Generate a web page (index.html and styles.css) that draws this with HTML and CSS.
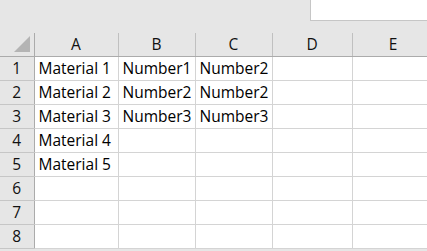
FILE: index.html
```html
<!DOCTYPE html>
<html lang="en">
<head>
    <meta charset="UTF-8" />
    <title>Sheet1</title>
    <link rel="stylesheet" href="styles.css">
</head>
<body>
    <div class="toolbar">
        <div class="name-box"></div>
    </div>
    <table class="sheet">
        <colgroup>
            <col class="w-head">
            <col class="w-a">
            <col class="w-b">
            <col class="w-c">
            <col class="w-d">
            <col class="w-e">
        </colgroup>
        <thead>
            <tr>
                <th class="corner">
                    <svg width="16" height="16" viewBox="0 0 16 16"><polygon points="16,0 16,16 0,16" fill="#b4b4b4"/></svg>
                </th>
                <th>A</th>
                <th>B</th>
                <th>C</th>
                <th>D</th>
                <th>E</th>
            </tr>
        </thead>
        <tbody>
            <tr><th>1</th><td>Material 1</td><td>Number1</td><td>Number2</td><td></td><td></td></tr>
            <tr><th>2</th><td>Material 2</td><td>Number2</td><td>Number2</td><td></td><td></td></tr>
            <tr><th>3</th><td>Material 3</td><td>Number3</td><td>Number3</td><td></td><td></td></tr>
            <tr><th>4</th><td>Material 4</td><td></td><td></td><td></td><td></td></tr>
            <tr><th>5</th><td>Material 5</td><td></td><td></td><td></td><td></td></tr>
            <tr><th>6</th><td></td><td></td><td></td><td></td><td></td></tr>
            <tr><th>7</th><td></td><td></td><td></td><td></td><td></td></tr>
            <tr><th>8</th><td></td><td></td><td></td><td></td><td></td></tr>
        </tbody>
    </table>
</body>
</html>
```

FILE: styles.css
```css
body {
    margin: 0;
    background: #e6e6e6;
    font-family: "Open Sans", sans-serif;
    font-size: 15.5px;
    color: #000;
    overflow: hidden;
}
.toolbar {
    height: 33px;
    display: flex;
    justify-content: flex-end;
}
.name-box {
    width: 116px;
    height: 20px;
    background: #fff;
    border-left: 1px solid #c6c6c6;
    border-bottom: 1px solid #c6c6c6;
}
.sheet {
    table-layout: fixed;
    border-collapse: collapse;
    width: 434px;
    background: #fff;
}
.w-head { width: 34px; }
.w-a { width: 84px; }
.w-b { width: 77px; }
.w-c { width: 77px; }
.w-d { width: 80px; }
.w-e { width: 82px; }
.sheet th,
.sheet td {
    height: 23px;
    padding: 0;
    line-height: 23px;
    white-space: nowrap;
    overflow: hidden;
}
.sheet thead th {
    background: #e6e6e6;
    font-weight: normal;
    text-align: center;
    color: #111;
    border-right: 1px solid #c0c0c0;
    border-bottom: 1px solid #ababab;
}
.sheet thead th.corner {
    position: relative;
    border-right: 1px solid #ababab;
}
.corner svg {
    position: absolute;
    left: 14px;
    bottom: 4px;
}
.sheet tbody th {
    background: #e6e6e6;
    font-weight: normal;
    text-align: center;
    color: #111;
    border-right: 1px solid #ababab;
    border-bottom: 1px solid #c6c6c6;
}
.sheet td {
    padding-left: 4px;
    border-right: 1px solid #d4d4d4;
    border-bottom: 1px solid #d4d4d4;
}
```
